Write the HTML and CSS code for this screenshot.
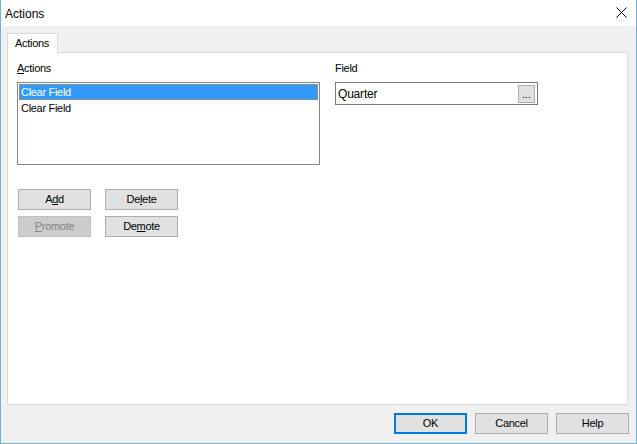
FILE: index.html
```html
<!DOCTYPE html>
<html>
<head>
<meta charset="utf-8">
<title>Actions</title>
<link rel="stylesheet" href="styles.css">
</head>
<body>
<div class="window">
  <div class="titlebar">
    <span class="title">Actions</span>
    <svg class="close" width="11" height="11" viewBox="0 0 11 11"><path d="M0.5 0.5 L10.5 10.5 M10.5 0.5 L0.5 10.5" stroke="#000" stroke-width="1" fill="none"/></svg>
  </div>
  <div class="content">
    <div class="tabs"><div class="tab">Actions</div></div>
    <div class="panel">
      <div class="col-left">
        <div class="label"><u>A</u>ctions</div>
        <div class="listbox">
          <div class="item selected">Clear Field</div>
          <div class="item">Clear Field</div>
        </div>
        <div class="btn-grid">
          <button class="btn">A<u>d</u>d</button>
          <button class="btn">De<u>l</u>ete</button>
          <button class="btn disabled"><u>P</u>romote</button>
          <button class="btn">De<u>m</u>ote</button>
        </div>
      </div>
      <div class="col-right">
        <div class="label">Field</div>
        <div class="textbox">
          <span class="value">Quarter</span>
          <span class="browse">...</span>
        </div>
      </div>
    </div>
    <div class="footer">
      <button class="btn default">OK</button>
      <button class="btn">Cancel</button>
      <button class="btn">Help</button>
    </div>
  </div>
</div>
</body>
</html>
```
FILE: styles.css
```css
* { box-sizing: border-box; }
html, body { margin: 0; padding: 0; }
body {
  width: 637px;
  height: 444px;
  font-family: "Liberation Sans", Arial, sans-serif;
  font-size: 11px;
  color: #000;
  background: #fff;
}
.window {
  width: 637px;
  height: 444px;
  border: 1px solid #6db6d1;
  border-top: none;
  background: #f0f0f0;
  display: flex;
  flex-direction: column;
}
.titlebar {
  height: 26px;
  background: #fff;
  display: flex;
  align-items: center;
  justify-content: space-between;
  padding: 0 9px 0 4px;
  flex: none;
}
.title {
  font-size: 12px;
  line-height: 26px;
  padding-top: 1px;
}
.close { display: block; margin-top: -1px; }
.content {
  flex: 1;
  display: flex;
  flex-direction: column;
  padding: 7px 7px 0 6px;
}
.tabs {
  display: flex;
  height: 20px;
  margin-bottom: -1px;
  position: relative;
  z-index: 1;
}
.tab {
  width: 51px;
  height: 21px;
  background: #fff;
  border: 1px solid #d9d9d9;
  border-bottom: none;
  padding: 3px 0 0 7px;
  letter-spacing: -0.3px;
}
.panel {
  width: 621px;
  height: 353px;
  background: #fff;
  border: 1px solid #d9d9d9;
  display: flex;
  gap: 15px;
  padding: 9px 0 0 9px;
  flex: none;
}
.label {
  height: 13px;
  line-height: 13px;
  letter-spacing: -0.3px;
}
.listbox {
  margin-top: 7px;
  width: 303px;
  height: 83px;
  border: 1px solid #828790;
  padding: 1px;
  background: #fff;
}
.item {
  height: 16px;
  line-height: 14px;
  padding-left: 1px;
  border: 1px solid transparent;
  letter-spacing: -0.3px;
}
.item.selected {
  background: #3399ff;
  color: #fff;
  border: 1px dotted #d98a2a;
}
.btn-grid {
  margin-top: 24px;
  margin-left: 1px;
  display: grid;
  grid-template-columns: 73px 73px;
  column-gap: 14px;
  row-gap: 6px;
}
.btn {
  width: 73px;
  height: 21px;
  background: #e1e1e1;
  border: 1px solid #adadad;
  font-family: "Liberation Sans", Arial, sans-serif;
  font-size: 11px;
  letter-spacing: -0.3px;
  color: #000;
  padding: 0;
  margin: 0;
  line-height: 19px;
  text-align: center;
}
.btn.disabled {
  background: #cccccc;
  border-color: #bfbfbf;
  color: #838383;
}
.btn.default {
  border: 2px solid #0078d7;
  line-height: 17px;
}
.textbox {
  margin-top: 7px;
  width: 203px;
  height: 23px;
  border: 1px solid #7a7a7a;
  display: flex;
  align-items: center;
  justify-content: space-between;
  padding: 0 2px 0 2px;
}
.value {
  font-size: 12px;
  letter-spacing: -0.2px;
}
.browse {
  width: 17px;
  height: 18px;
  background: #e1e1e1;
  border: 1px solid #adadad;
  font-size: 10px;
  line-height: 18px;
  text-align: center;
}
.footer {
  margin-top: 8px;
  display: flex;
  justify-content: flex-end;
  gap: 8px;
  padding-right: 0;
}
```
